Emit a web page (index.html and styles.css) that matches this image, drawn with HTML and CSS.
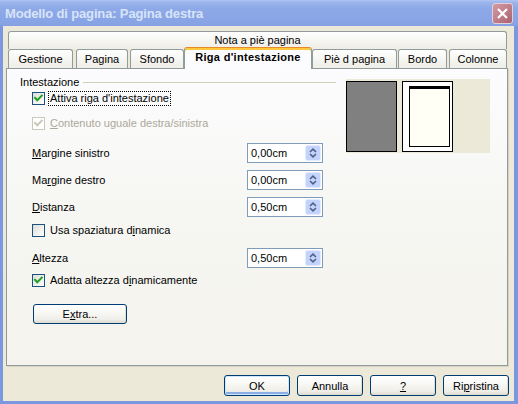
FILE: index.html
```html
<!DOCTYPE html>
<html lang="it">
<head>
<meta charset="utf-8">
<title>Modello di pagina: Pagina destra</title>
<link rel="stylesheet" href="styles.css">
</head>
<body>
<div class="window">
  <div class="titlebar">
    <span class="title">Modello di pagina: Pagina destra</span>
    <span class="close">
      <svg viewBox="0 0 19 19" width="19" height="19"><path d="M5 5 L14 14 M14 5 L5 14"/></svg>
    </span>
  </div>
  <div class="client">
    <div class="tabs">
      <div class="tabrow toprow">
        <div class="tab tab-wide">Nota a piè pagina</div>
      </div>
      <div class="tabrow bottomrow">
        <div class="tab t-gestione">Gestione</div>
        <div class="tab t-pagina">Pagina</div>
        <div class="tab t-sfondo">Sfondo</div>
        <div class="tab tab-active t-riga">Riga d'intestazione</div>
        <div class="tab t-pie">Piè d pagina</div>
        <div class="tab t-bordo">Bordo</div>
        <div class="tab t-colonne">Colonne</div>
      </div>
    </div>
    <div class="panel">
      <div class="form">
        <div class="group-title"><span>Intestazione</span><span class="rule"></span></div>

        <div class="check-row r-attiva">
          <span class="cb"><svg viewBox="0 0 11 11"><path d="M2 4.8 L4.3 7.3 L8.8 2.6"/></svg></span>
          <span class="label focus">Attiva riga d'intestazione</span>
        </div>

        <div class="check-row r-contenuto disabled">
          <span class="cb"><svg viewBox="0 0 11 11"><path d="M2 4.8 L4.3 7.3 L8.8 2.6"/></svg></span>
          <span class="label"><u>C</u>ontenuto uguale destra/sinistra</span>
        </div>

        <div class="field-row r-msin">
          <span class="flabel"><u>M</u>argine sinistro</span>
          <span class="spin"><span>0,00cm</span><svg class="spinbtn" viewBox="0 0 16 16"><rect x="0.5" y="0.5" width="15" height="15" rx="2"/><path d="M5 7 L8 4.2 L11 7 M5 9 L8 11.8 L11 9"/></svg></span>
        </div>

        <div class="field-row r-mdes">
          <span class="flabel">Ma<u>r</u>gine destro</span>
          <span class="spin"><span>0,00cm</span><svg class="spinbtn" viewBox="0 0 16 16"><rect x="0.5" y="0.5" width="15" height="15" rx="2"/><path d="M5 7 L8 4.2 L11 7 M5 9 L8 11.8 L11 9"/></svg></span>
        </div>

        <div class="field-row r-dist">
          <span class="flabel"><u>D</u>istanza</span>
          <span class="spin"><span>0,50cm</span><svg class="spinbtn" viewBox="0 0 16 16"><rect x="0.5" y="0.5" width="15" height="15" rx="2"/><path d="M5 7 L8 4.2 L11 7 M5 9 L8 11.8 L11 9"/></svg></span>
        </div>

        <div class="check-row r-usa">
          <span class="cb unchecked"></span>
          <span class="label">Usa spaziatura d<u>i</u>namica</span>
        </div>

        <div class="field-row r-alt">
          <span class="flabel"><u>A</u>ltezza</span>
          <span class="spin"><span>0,50cm</span><svg class="spinbtn" viewBox="0 0 16 16"><rect x="0.5" y="0.5" width="15" height="15" rx="2"/><path d="M5 7 L8 4.2 L11 7 M5 9 L8 11.8 L11 9"/></svg></span>
        </div>

        <div class="check-row r-adatta">
          <span class="cb"><svg viewBox="0 0 11 11"><path d="M2 4.8 L4.3 7.3 L8.8 2.6"/></svg></span>
          <span class="label">Adatta altezza d<u>i</u>namicamente</span>
        </div>

        <button class="btn btn-extra">E<u>x</u>tra...</button>
      </div>

      <div class="preview">
        <svg viewBox="0 0 144 74" width="144" height="74">
          <rect x="0" y="0" width="144" height="74" fill="#ece9d8"/>
          <rect x="0.5" y="2.5" width="50" height="70" fill="#808080" stroke="#000"/>
          <rect x="56.5" y="2.5" width="50" height="70" fill="#fff" stroke="#000"/>
          <rect x="63.5" y="7.5" width="40" height="60" fill="#fffff6" stroke="#000"/>
          <rect x="63" y="7" width="41" height="3" fill="#000"/>
        </svg>
      </div>
    </div>
    <div class="buttons">
      <button class="btn btn-default">OK</button>
      <button class="btn">Annulla</button>
      <button class="btn"><u>?</u></button>
      <button class="btn">Ri<u>p</u>ristina</button>
    </div>
  </div>
</div>
</body>
</html>
```

FILE: styles.css
```css
* { box-sizing: border-box; margin: 0; padding: 0; }
html, body { width: 518px; height: 404px; overflow: hidden; }
body {
  font-family: "Liberation Sans", Arial, sans-serif;
  font-size: 11px;
  color: #000;
  background: #7b97e0;
}
u { text-decoration: underline; text-underline-offset: 1px; }

.window {
  display: flex;
  flex-direction: column;
  width: 518px;
  height: 404px;
  background: #7b97e0;
}

/* Title bar */
.titlebar {
  height: 26px;
  flex: none;
  display: flex;
  align-items: center;
  justify-content: space-between;
  padding: 0 5px 0 5px;
  background: linear-gradient(to bottom, #b2c6f2 0, #9db6ec 2px, #8ea9e7 8px, #8aa5e5 20px, #86a1e3 26px);
}
.title {
  font-weight: bold;
  font-size: 13px;
  letter-spacing: -0.15px;
  color: #d8e4f8;
  padding-top: 1px;
}
.close {
  width: 21px;
  height: 21px;
  border: 1px solid #e4d0d8;
  border-radius: 3px;
  background: linear-gradient(135deg, #d49aa4 0%, #c07f8b 50%, #a9606e 100%);
  display: flex;
  align-items: center;
  justify-content: center;
  margin-top: 1px;
}
.close path { stroke: #fff; stroke-width: 2.2; fill: none; }

/* Client area */
.client {
  flex: 1;
  margin: 0 4px 3px 3px;
  background: #ece9d8;
  display: flex;
  flex-direction: column;
  padding: 5px 6px 5px 3px;
}

/* Tabs */
.tabs { margin: 0 1px 0 2px; }
.tabrow { display: flex; align-items: flex-end; }
.toprow { height: 18px; }
.bottomrow { height: 19px; }
.tab {
  height: 100%;
  border: 1px solid #919b9c;
  border-bottom: none;
  border-radius: 3px 3px 0 0;
  background: linear-gradient(to bottom, #ffffff 0%, #f7f7f4 40%, #eeede6 100%);
  text-align: center;
  line-height: 16px;
  white-space: nowrap;
  overflow: hidden;
}
.tab-wide { width: 100%; }
.bottomrow .tab { line-height: 18px; }
.t-gestione { width: 65px; margin-right: 3px; }
.t-pagina { width: 52px; margin-right: 2px; }
.t-sfondo { width: 54px; }
.t-riga { width: 128px; }
.t-pie { width: 85px; margin-right: 1px; }
.t-bordo { width: 49px; margin-right: 2px; }
.t-colonne { width: 58px; }
.tab-active {
  position: relative;
  z-index: 1;
  height: 22px;
  margin-top: -2px;
  margin-bottom: -1px;
  border-top: 1px solid #e68b2c;
  box-shadow: inset 0 2px 0 #ffc73c;
  background: #fcfcfe;
  font-weight: bold;
  letter-spacing: 0.3px;
  line-height: 20px;
}

/* Panel */
.panel {
  flex: 0 0 298px;
  border: 1px solid #919b9c;
  background: linear-gradient(to bottom, #fcfcfe 0%, #f6f6f2 50%, #f4f3ee 100%);
  box-shadow: 1px 1px 0 #d6d3c3;
  display: grid;
  grid-template-columns: 316px 144px;
  column-gap: 10px;
  align-items: start;
  padding: 7px 0 0 13px;
}
.form { display: flex; flex-direction: column; }
.group-title {
  height: 13px;
  line-height: 13px;
  display: flex;
  align-items: center;
  gap: 4px;
}
.group-title .rule { flex: 1; height: 1px; background: #d0d0bf; }

.check-row {
  height: 13px;
  display: flex;
  align-items: center;
  gap: 3px;
  padding-left: 12px;
}
.cb {
  flex: none;
  width: 13px;
  height: 13px;
  border: 1px solid #1c5180;
  background: linear-gradient(135deg, #dcdcd7 0%, #f2f2ef 60%, #ffffff 100%);
}
.cb svg { display: block; width: 11px; height: 11px; }
.cb path { fill: none; stroke: #21a121; stroke-width: 2; stroke-linecap: square; }
.label {
  line-height: 13px;
  padding: 0 1px;
  border: 1px solid transparent;
  white-space: nowrap;
}
.label.focus { border: 1px dotted #000; }
.disabled .label { color: #aca899; }
.disabled .cb { border-color: #cac8bb; background: #fff; }
.disabled .cb path { stroke: #cac8bb; }

.r-attiva { margin-top: 3px; }
.r-contenuto { margin-top: 12px; }
.r-msin { margin-top: 13px; }
.r-mdes { margin-top: 7px; }
.r-dist { margin-top: 7px; }
.r-usa { margin-top: 7px; }
.r-alt { margin-top: 11px; }
.r-adatta { margin-top: 6px; }

.field-row {
  height: 20px;
  display: grid;
  grid-template-columns: 215px 76px;
  align-items: center;
  padding-left: 12px;
}
.flabel { white-space: nowrap; }
.spin {
  height: 20px;
  border: 1px solid #7f9db9;
  background: #fff;
  display: flex;
  align-items: center;
  justify-content: space-between;
  padding: 0 1px 0 3px;
}
.spinbtn { width: 16px; height: 16px; display: block; }
.spinbtn rect { fill: #c3d3fb; stroke: #e3ebfd; }
.spinbtn path { fill: none; stroke: #4d6185; stroke-width: 1.6; }

/* Buttons */
.btn {
  font-family: inherit;
  font-size: 11px;
  color: #000;
  height: 21px;
  width: 66px;
  border: 1px solid #003c74;
  border-radius: 3px;
  background: linear-gradient(to bottom, #ffffff 0%, #f8f8f5 40%, #efeee8 80%, #dcd8cc 100%);
  box-shadow: inset -1px -1px 0 #e0ddd2;
  cursor: default;
}
.btn-extra {
  width: 94px;
  height: 20px;
  margin-top: 17px;
  margin-left: 13px;
}
.btn-default {
  box-shadow: inset 0 0 0 1px #cee7ff, inset 0 -2px 0 1px #89ade4;
}
.buttons {
  margin-top: 9px;
  margin-right: -1px;
  display: flex;
  justify-content: flex-end;
  gap: 7px;
}

.preview { margin-top: 3px; }
.preview svg { display: block; }
```
